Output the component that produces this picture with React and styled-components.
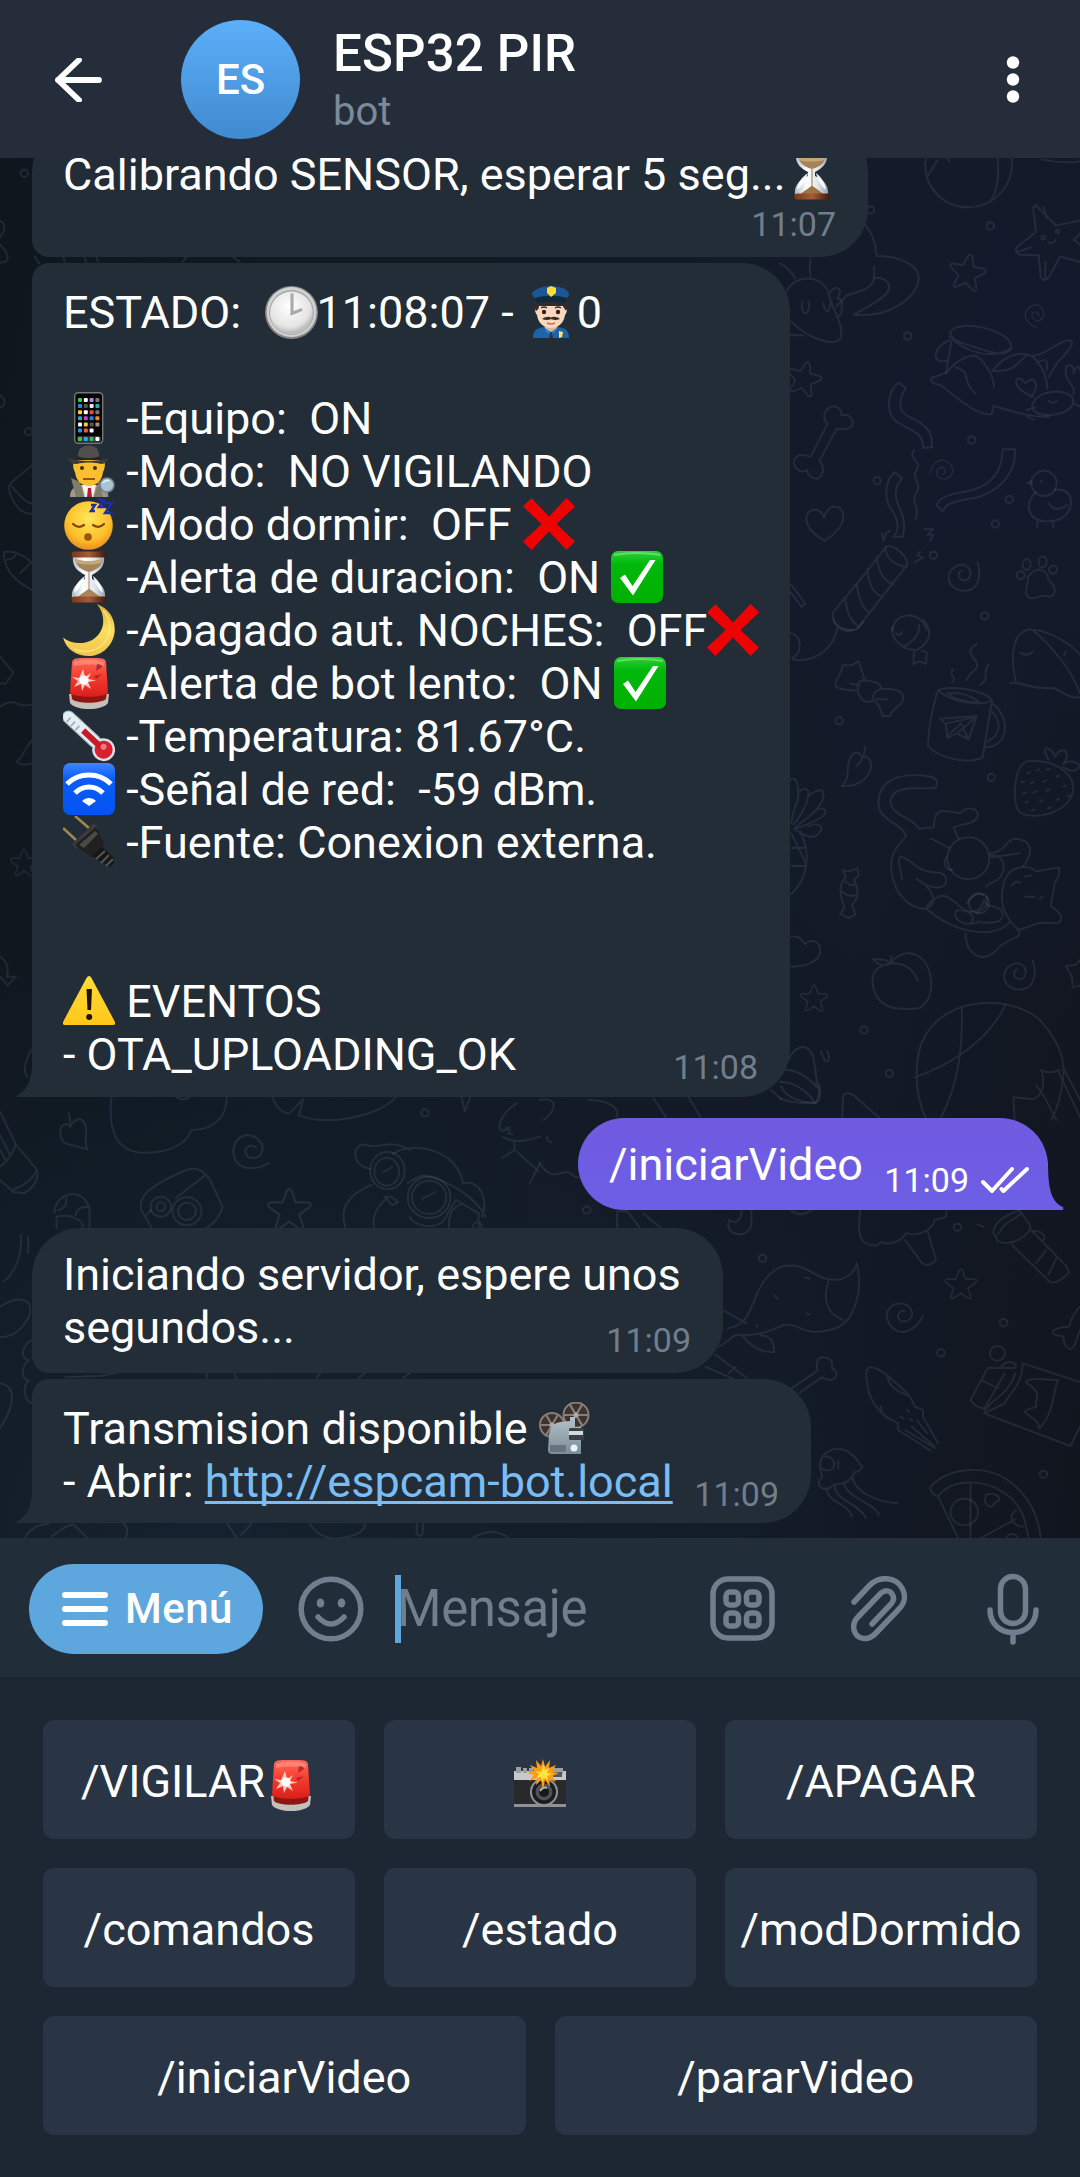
import React from "react";
import styled, { createGlobalStyle } from "styled-components";

const GlobalStyle = createGlobalStyle`
  * { box-sizing: border-box; }
  html, body { margin: 0; background: #1d2733; }
  body { font-family: Roboto, "Noto Sans", sans-serif; color: #fff; }
  svg { display: block; flex: none; }
`;

const Screen = styled.div`
  width: 1080px;
  height: 2177px;
  display: flex;
  flex-direction: column;
  overflow: hidden;
  background: #1d2733;
`;

/* ---------- header ---------- */
const Header = styled.header`
  height: 158px;
  flex: none;
  display: flex;
  align-items: center;
  padding: 1px 50px 0 54px;
  background: #252d3a;
`;
const Avatar = styled.div`
  width: 119px;
  height: 119px;
  margin-left: 79px;
  border-radius: 50%;
  display: flex;
  align-items: center;
  justify-content: center;
  background: linear-gradient(#5caffa, #408acf);
  font-size: 42px;
  font-weight: 500;
`;
const Titles = styled.div`
  flex: 1;
  margin-left: 33px;
  height: 158px;
  padding-top: 23px;
`;
const Title = styled.h1`
  margin: 0;
  font-size: 51px;
  font-weight: 500;
  line-height: 60px;
  letter-spacing: 0.15px;
`;
const Subtitle = styled.div`
  margin-top: 4px;
  font-size: 40px;
  line-height: 47px;
  color: #7c8a99;
`;

/* ---------- chat ---------- */
const Chat = styled.main`
  position: relative;
  height: 1380px;
  flex: none;
  overflow: hidden;
  display: flex;
  flex-direction: column;
  justify-content: flex-end;
  padding: 0 32px 15px;
  background:
    radial-gradient(ellipse 620px 620px at 100% 18%, #141a2c 0%, rgba(20, 26, 44, 0) 100%),
    radial-gradient(ellipse 700px 600px at 20% 100%, #15212e 0%, rgba(21, 33, 46, 0) 100%),
    linear-gradient(100deg, #0f171e 0%, #101922 35%, #131a27 75%, #11151e 100%);
`;
const Wallpaper = styled.svg`
  position: absolute;
  inset: 0;
  width: 1080px;
  height: 1380px;
  fill: none;
  stroke: rgba(165, 172, 205, 0.12);
  stroke-width: 5.8;
  stroke-linecap: round;
  stroke-linejoin: round;
`;
const Bubble = styled.section`
  position: relative;
  flex: none;
  align-self: ${(p) => (p.$out ? "flex-end" : "flex-start")};
  width: ${(p) => p.$w}px;
  margin-top: ${(p) => p.$gap || 0}px;
  padding: ${(p) => p.$pad};
  border-radius: ${(p) => p.$radius};
  display: flex;
  flex-direction: ${(p) => (p.$stack ? "column" : "row")};
  align-items: flex-end;
  justify-content: space-between;
  background: ${(p) => (p.$out ? "linear-gradient(#705ae0, #6c5fe5)" : "#222d38")};
`;
const Body = styled.div`
  align-self: flex-start;
  font-size: 45px;
`;
const Line = styled.div`
  height: 53px;
  line-height: 53px;
  display: flex;
  white-space: pre;
`;
const Link = styled.a`
  color: #7abdf5;
  text-decoration: underline;
  text-decoration-thickness: 3px;
  text-underline-offset: 4px;
  text-decoration-skip-ink: none;
`;
const Meta = styled.div`
  display: flex;
  align-items: center;
  gap: 12px;
  margin: ${(p) => p.$rise || 0}px 0 ${(p) => p.$drop || 0}px ${(p) => (p.$tuck ? "-90px" : "0")};
  font-size: 34px;
  line-height: 40px;
  color: ${(p) => (p.$out ? "#fff" : "#717e8c")};
`;
const Tail = styled.svg`
  position: absolute;
  bottom: 0;
  ${(p) => (p.$right ? "right: -16px;" : "left: -16px;")}
`;

/* ---------- composer ---------- */
const Composer = styled.div`
  height: 139px;
  flex: none;
  display: flex;
  align-items: center;
  padding: 2px 41px 0 29px;
  background: #222d3a;
`;
const MenuButton = styled.button`
  width: 234px;
  height: 90px;
  padding: 0 0 0 33px;
  border: 0;
  border-radius: 45px;
  display: flex;
  align-items: center;
  gap: 17px;
  background: #5da6de;
  color: #fff;
  font: 500 42px/50px Roboto, sans-serif;
  letter-spacing: 0.5px;
`;
const MessageField = styled.div`
  flex: 1;
  display: flex;
  align-items: center;
  margin-left: 31px;
  font-size: 51px;
  line-height: 60px;
  letter-spacing: -0.4px;
  color: #717e8e;
`;
const Caret = styled.span`
  width: 6px;
  height: 68px;
  background: #5da6de;
`;
const Placeholder = styled.span`
  margin-left: -4px;
`;
const Glyph = styled.svg`
  margin-left: ${(p) => p.$before || 0}px;
  fill: none;
  stroke: #717e8e;
  stroke-width: 5.5;
  stroke-linecap: round;
  stroke-linejoin: round;
`;
const Eye = styled.ellipse`
  fill: #717e8e;
  stroke: none;
`;
const Tools = styled.div`
  display: flex;
  align-items: center;
`;

/* ---------- keyboard ---------- */
const Keyboard = styled.div`
  flex: 1;
  display: flex;
  flex-direction: column;
  gap: 29px;
  padding: 43px 43px 42px;
  background: #1d2733;
`;
const KeyRow = styled.div`
  display: flex;
  gap: 29px;
`;
const Key = styled.button`
  flex: 1 1 0;
  min-width: 0;
  height: 119px;
  padding: 3px 0 0;
  border: 0;
  border-radius: 11px;
  display: flex;
  align-items: center;
  justify-content: center;
  white-space: nowrap;
  background: #293544;
  color: #fff;
  font: 400 45px/53px Roboto, sans-serif;

  svg {
    margin-top: 7px;
  }
`;

/* ---------- emoji ---------- */
const HiddenDefs = styled.svg`
  position: absolute;
  width: 0;
  height: 0;
`;
const Gradients = () => (
  <HiddenDefs aria-hidden="true">
    <defs>
      <radialGradient id="face" cx=".5" cy=".35" r=".65">
        <stop offset="0" stopColor="#ffe65c" /><stop offset=".7" stopColor="#fdbf2b" /><stop offset="1" stopColor="#f08c1e" />
      </radialGradient>
      <linearGradient id="red" x2="0" y2="1">
        <stop offset="0" stopColor="#ff6a5a" /><stop offset=".5" stopColor="#f53a2e" /><stop offset="1" stopColor="#d81f1a" />
      </linearGradient>
      <linearGradient id="green" x2="0" y2="1">
        <stop offset="0" stopColor="#2fd03a" /><stop offset=".25" stopColor="#00b80c" /><stop offset="1" stopColor="#00b000" />
      </linearGradient>
      <linearGradient id="blue" x2="0" y2="1">
        <stop offset="0" stopColor="#3f86ff" /><stop offset=".3" stopColor="#0a5cf8" /><stop offset="1" stopColor="#0454f2" />
      </linearGradient>
      <linearGradient id="wood" x2="1" y2="0">
        <stop offset="0" stopColor="#7a3718" /><stop offset=".5" stopColor="#a85b38" /><stop offset="1" stopColor="#3d1808" />
      </linearGradient>
      <linearGradient id="steel" x2="0" y2="1">
        <stop offset="0" stopColor="#b4c2c8" /><stop offset="1" stopColor="#7a8d96" />
      </linearGradient>
      <linearGradient id="glass" x2="1" y2="0">
        <stop offset="0" stopColor="#aeb8c4" /><stop offset=".35" stopColor="#ffffff" /><stop offset=".7" stopColor="#dfe5ea" /><stop offset="1" stopColor="#929faf" />
      </linearGradient>
      <radialGradient id="dial" cx=".45" cy=".35" r=".6">
        <stop offset="0" stopColor="#ffffff" /><stop offset=".8" stopColor="#e4e4e4" /><stop offset="1" stopColor="#bdbdbd" />
      </radialGradient>
      <linearGradient id="moon" x2="0" y2="1">
        <stop offset="0" stopColor="#e2ab31" /><stop offset=".5" stopColor="#fbdf60" /><stop offset="1" stopColor="#efc24a" />
      </linearGradient>
      <linearGradient id="warn" x2="0" y2="1">
        <stop offset="0" stopColor="#ffdc3c" /><stop offset="1" stopColor="#ffc818" />
      </linearGradient>
    </defs>
  </HiddenDefs>
);

const EmojiBox = styled.svg`
  margin: 0 ${(p) => -(p.$shift || 0)}px 0 ${(p) => p.$shift || 0}px;
`;
const Emoji = ({ size = 52, shift, label, children }) => (
  <EmojiBox $shift={shift} width={size} height={size} viewBox="0 0 52 52" role="img" aria-label={label}>{children}</EmojiBox>
);

const Hourglass = ({ filled }) => (
  <Emoji label="reloj de arena">
    <path d="M10 5h31c1 8-2 14-12 19v4c10 4 14 11 13 19H9c-1-8 3-15 13-19v-4C12 19 9 13 10 5z" fill="url(#glass)" />
    <path d="M12 8c9 3 19 3 27 0 0 7-5 11-13 13-8-2-13-6-14-13z" fill="#a58458" />
    <path d="M12 8c9 3 19 3 27 0l-1 4c-7 2-18 2-25 0z" fill="#c5a77c" />
    <path d="M25.500 21v17c-4 3-9 6-12 9h25c-3-3-8-6-12-9V21z" fill={filled ? "#9c7440" : "#a9845a"} />
    <path d="M22 25c-6 4-10 9-11 17 4-3 9-9 11-17zM30 25c5 4 9 9 10 17-4-3-8-9-10-17z" fill="#fff" opacity=".9" />
    <rect x="8.500" y="0.500" width="35" height="6" rx="2.500" fill="url(#wood)" />
    <rect x="8.500" y="45.500" width="35" height="6" rx="2.500" fill="url(#wood)" />
  </Emoji>
);
const Clock = () => (
  <Emoji size={53} shift={2} label="reloj">
    <circle cx="26" cy="26" r="26" fill="#858585" />
    <circle cx="26" cy="25.500" r="24.500" fill="#d2d2d2" />
    <circle cx="26" cy="26" r="22" fill="#a6a6a6" />
    <circle cx="26" cy="26.500" r="21" fill="url(#dial)" />
    <path d="M26.500 7v20l10-4" fill="none" stroke="#a9a9a9" strokeWidth="3" />
  </Emoji>
);
const Police = () => (
  <Emoji label="policia">
    <path d="M8 52c0-7 3-10 11-11h14c8 1 11 4 11 11z" fill="#1e62a8" />
    <path d="M19 40h14l-3 6-4 3-5-3z" fill="#2c80cf" />
    <path d="M20 34h12v8l-6 4-6-4z" fill="#e4b291" />
    <path d="M10 23c0-9 6-13 16-13s16 4 16 13c0 3-1 5-2 6-1 8-7 13-14 13s-13-5-14-13c-1-1-2-3-2-6z" fill="#f8d9bd" />
    <path d="M9 15h34v6c-1 3-2 3-2 4-2-3-3-4-3-5H14c0 2-1 4-3 5-1-2-2-4-2-6z" fill="#322b2a" />
    <path d="M7 7C12 2 18 0 26 0s14 2 18 7c0 4-2 5-6 7H14C9 12 7 10 7 7z" fill="#1c5694" />
    <path d="M10 12c10-3 22-3 32 0l-2 6c-9-3-19-3-28 0z" fill="#11283e" />
    <path d="M22 2l4-2 5 2v5l-5 4-4-4z" fill="#ffdc35" />
    <circle cx="19" cy="26" r="2.200" fill="#30221d" /><circle cx="33" cy="26" r="2.200" fill="#30221d" />
    <path d="M16 22q3-2 6 0M30 22q3-2 6 0" fill="none" stroke="#3d2a20" strokeWidth="1.500" />
    <path d="M17 33c3-2 7-3 9-1.500 3-1.500 6-.5 9 1.500-5 1.500-7 1-9 0-2 1-5 1.500-9 0z" fill="#3a2a23" />
    <path d="M22 37q4 2 8 0" fill="none" stroke="#c0705b" strokeWidth="1.500" />
    <path d="M25 46h2l1 6h-4z" fill="#173a63" /><path d="M34 45l4 1-1 5-3 1z" fill="#ffe262" />
  </Emoji>
);
const appColors = [
  "#35c759", "#fff", "#b48be8", "#777", "#1996d9", "#555", "#eee", "#22b0c0", "#ffcc33", "#fff", "#e84c4c", "#777",
  "#23a9c9", "#ce3bd0", "#1689ea", "#f28b1d", "#fff", "#f5c645", "#555", "#a98d70", "#2396d8", "#ee574b", "#fff",
];
const Phone = () => (
  <Emoji label="movil">
    <rect x="11.700" y=".7" width="28" height="50.600" rx="3.500" fill="#050505" stroke="#777" strokeWidth="1.400" />
    {appColors.map((c, i) => (
      <rect key={i} x={15 + (i % 4) * 5.800} y={6 + Math.floor(i / 4) * 6.100} width="4" height="4" rx="1" fill={c} />
    ))}
    <rect x="14" y="44" width="24" height="6" rx="1.500" fill="#313335" />
    {["#34c35b", "#27aee4", "#31bd67", "#fff"].map((c, i) => (
      <rect key={c} x={15 + i * 5.800} y="45" width="4" height="4" rx="1" fill={c} />
    ))}
  </Emoji>
);
const Detective = () => (
  <Emoji label="detective">
    <path d="M7 52c0-7 3-9 9-12h19c6 2 9 6 9 12z" fill="#a09b88" />
    <path d="M8 33l9 4 4 15h-8zM36 35l-5 17h9z" fill="#807c6c" />
    <path d="M19 40h14l-3 12h-8z" fill="#f4f4f4" /><path d="M25 43h3l1 9h-5z" fill="#b51f2c" />
    <path d="M11 15h30c2 6 0 10-1 12-1 9-7 14-14 14s-13-5-14-14c-1-2-3-6-1-12z" fill="#fbbf2b" />
    <path d="M16 5C20-1 32-1 35 5l2 9H14z" fill="#514f4e" />
    <path d="M14 11c8 3 16 3 23 0l1 4H13z" fill="#272524" />
    <path d="M5 13c12 4 29 4 41 0-2 4-5 6-8 6-7-2-17-2-24 0-5 0-7-2-9-6z" fill="#3d3a39" />
    <circle cx="19" cy="23" r="2" fill="#44301a" /><circle cx="32" cy="23" r="2" fill="#44301a" />
    <path d="M20 34h12" stroke="#8a4b12" strokeWidth="1.800" />
    <path d="M43 45l1 7" stroke="#8d9294" strokeWidth="3" />
    <circle cx="44" cy="40" r="7" fill="#a8c3d4" stroke="#768089" strokeWidth="1.600" />
    <path d="M40 38q3-4 6-2" stroke="#e6f1f8" strokeWidth="1.600" fill="none" />
  </Emoji>
);
const Sleepy = () => (
  <Emoji label="durmiendo">
    <circle cx="25.500" cy="27.500" r="24.300" fill="url(#face)" />
    <path d="M10 26q5 5 11 1M30 27q6 4 11-1" fill="none" stroke="#80460e" strokeWidth="2.200" strokeLinecap="round" />
    <circle cx="25" cy="39" r="3.800" fill="#9a5215" />
    <path d="M28 7h4l-4 6h4M35 2h6l-5 7h6M41 5h8l-7 10h8" fill="none" stroke="#1c2fa3" strokeWidth="2.400" />
  </Emoji>
);
const Moon = () => (
  <Emoji label="luna">
    <path d="M34 0C47 5 53 16 51.500 29 49 44 37 52 26 52 13 52 3 45 0 33.500 9 41 25 41 33 33c10-9 9-23 1-33z" fill="url(#moon)" />
    <path d="M40 6c8 9 9 22 2 32-7 9-20 12-31 7" fill="none" stroke="#ffec8c" strokeWidth="2" opacity=".6" />
  </Emoji>
);
const Siren = () => (
  <Emoji label="sirena">
    <path d="M6 37h40l-1 9c-6 8-32 8-38 0z" fill="#c3bfba" />
    <path d="M8 34h36l-1 8c-6 5-29 5-34 0z" fill="#8f1513" />
    <path d="M9 5c1-4 4-4 17-4s16 0 17 4l2 31c-5 5-33 5-38 0z" fill="url(#red)" />
    <path d="M11 5c5-3 25-3 30 0v4c-9-2-21-2-30 0z" fill="#ff9184" opacity=".7" />
    <path d="M34 7c3 0 5 1 5 3l-6 4M31 19l8-2-6 5z" fill="#8d1917" opacity=".65" />
    <path d="M20 12l2 8 6-4-3 6 8 1.500-8 1.500 3 7-6-4-3 6-1-7-7 3 4-6-6-4 7 1z" fill="#ffc9c0" />
    <circle cx="21" cy="23" r="4.500" fill="#fff" />
  </Emoji>
);
const Thermometer = () => (
  <Emoji label="termometro">
    <g transform="rotate(-47 26 26)">
      <rect x="20" y="-8" width="12" height="48" rx="6" fill="#e5eef3" stroke="#a9b7c1" strokeWidth="1" />
      <circle cx="26" cy="46" r="11.500" fill="#d9dfe8" />
      <circle cx="26" cy="46" r="9" fill="#d9202c" />
      <rect x="23" y="18" width="6" height="26" fill="#c91a27" />
      <path d="M21 0h6M21 6h6M21 12h6" stroke="#9babb5" strokeWidth="1.600" />
      <circle cx="28" cy="44" r="3" fill="#f87a80" />
    </g>
  </Emoji>
);
const Wifi = () => (
  <Emoji label="wifi">
    <rect width="52" height="52" rx="7" fill="url(#blue)" />
    <path d="M4 21C16 9 36 9 48 21" fill="none" stroke="#fff" strokeWidth="5" />
    <path d="M12 30c8-8 20-8 28 0" fill="none" stroke="#fff" strokeWidth="5" />
    <path d="M26 43l-7-5c4-4 10-4 14 0z" fill="#fff" />
  </Emoji>
);
const Plug = () => (
  <Emoji label="enchufe">
    <path d="M0 12l13 12M12 0l14 12" stroke="#9c8a4a" strokeWidth="2.600" />
    <path d="M9 28L31 7l4 5-22 21z" fill="#3a3b38" />
    <path d="M12 29L33 11l8 16-4 12-9 2z" fill="#1f201f" />
    <path d="M16 29l16-14 3 3-14 14z" fill="#494a47" />
    <path d="M29 40l10-9 12 11v5l-4 4z" fill="#171717" />
    <path d="M33 43l9-8M38 47l8-8M43 50l7-7" stroke="#555652" strokeWidth="2" />
  </Emoji>
);
const Cross = () => (
  <Emoji label="no">
    <path d="M8.500 0L26 18.500 43.500 0 52 8.500 33.500 26 52 43.500 43.500 52 26 33.500 8.500 52 0 43.500 18.500 26 0 8.500z" fill="#ee0202" />
  </Emoji>
);
const Check = () => (
  <Emoji label="si">
    <rect width="52" height="52" rx="7" fill="url(#green)" />
    <path d="M3 4q23-4 46 0" stroke="#7be77d" strokeWidth="2" fill="none" opacity=".7" />
    <path d="M9 27l5-3.500L21.500 35 39 9h5.500L22 44.500z" fill="#fff" />
  </Emoji>
);
const Warning = () => (
  <Emoji label="aviso">
    <path d="M23.500 3q2.500-4 5 0L52 47q1 3-2 3H2q-3 0-2-3z" fill="url(#warn)" />
    <path d="M23.500 14h5.500l-1 21h-3.500z" fill="#1d1404" />
    <circle cx="26.200" cy="42" r="3" fill="#1d1404" />
  </Emoji>
);
const Projector = () => (
  <Emoji label="proyector">
    {[[13, 23, 12], [37, 13, 12.500]].map(([x, y, r]) => (
      <g key={x} fill="none" stroke="#8a7d77">
        <circle cx={x} cy={y} r={r} fill="#3a3330" strokeWidth="2" />
        <path d={`M${x - r} ${y}h${r * 2}M${x - r / 2} ${y - r * .85}l${r} ${r * 1.7}M${x + r / 2} ${y - r * .85}l${-r} ${r * 1.7}`} strokeWidth="2.200" />
        <circle cx={x} cy={y} r="2.500" fill="#b1aaa6" stroke="none" />
      </g>
    ))}
    <path d="M10 32q2-11 11-12l10-1v-4h5v10h6v27H13q-4 0-4-4z" fill="url(#steel)" />
    <rect x="11" y="43" width="16" height="7" fill="#66757d" />
    <rect x="30" y="26" width="15" height="12" rx="1.500" fill="#394147" />
    <rect x="30" y="29" width="14" height="4" fill="#d3dadd" />
    <circle cx="35" cy="46" r="3.500" fill="#eef2f3" />
  </Emoji>
);
const Camera = () => (
  <Emoji label="camara">
    <rect y="14" width="52" height="34" rx="2" fill="#28292b" />
    <path d="M0 12h52v9H0z" fill="#c7c9ca" />
    <path d="M2 8h5v6H2zM9 9h4v5H9zM15 9h4v5h-4zM38 9h11v6H38z" fill="#9da0a2" />
    <rect x="39" y="13" width="9" height="5" fill="#56595b" />
    <path d="M0 45h52v3H0z" fill="#909395" />
    <circle cx="30" cy="33" r="14" fill="#909294" /><circle cx="30" cy="33" r="12" fill="#1a1b1d" />
    <circle cx="30" cy="33" r="8.500" fill="#4e5156" /><circle cx="30" cy="33" r="5" fill="#17181a" />
    <path d="M26 32q3-5 7-3" stroke="#b0b4b8" strokeWidth="2" fill="none" />
    <path d="M29 0l2 8 5-7-1 8 7-3-4 7 7 1-7 3 4 6-7-3 1 8-5-7-2 10-2-10-5 5 1-7-8 3 5-6-7-2 7-2-4-6 7 3-1-8 5 6z" fill="#ff9d13" />
    <path d="M30 5l1 6 4-2-2 5 5 1-5 2 1 4-4-2-2 4-1-5-5 1 3-4-3-3 5 1z" fill="#ffe347" />
  </Emoji>
);

/* ---------- wallpaper doodles ---------- */
const Dot = ({ x, y }) => <circle cx={x} cy={y} r="11" />;
const Star = ({ x, y, s = 1, r = 0 }) => (
  <path transform={`translate(${x} ${y}) rotate(${r}) scale(${s})`}
    d="M-7-48Q0-62 7-48L16-20 46-20Q62-16 48-5L25 12 35 42Q36 55 22 47L0 30-24 47Q-37 53-33 39L-25 12-49-6Q-60-17-46-20L-17-20Z" />
);
const Spiral = ({ x, y, s = 1, r = 0 }) => (
  <path transform={`translate(${x} ${y}) rotate(${r}) scale(${s})`}
    d="M-4-14C-16-8-14 14 4 15 24 15 30-14 14-26-8-42-42-22-42 8-40 40-2 54 26 42 50 30 56-8 44-40" />
);
const Heart = ({ x, y, s = 1, r = 0 }) => (
  <path transform={`translate(${x} ${y}) rotate(${r}) scale(${s})`}
    d="M0 52C-30 36-58 10-55-18-50-48-12-50-2-16 6-58 52-62 56-24 58 6 28 36 0 52Z" />
);
const Leaf = ({ x, y, s = 1 }) => (
  <path transform={`translate(${x} ${y}) scale(${s})`}
    d="M-48 58C-18 30-42 0-20-32-8-48 4-44 10-30 30-36 44-16 38 6 30 44-12 60-48 58ZM-4-2C12-18 22-36 20-60" />
);

const Doodles = () => (
  <Wallpaper viewBox="0 158 1080 1380" aria-hidden="true">
    {/* upper right */}
    <g transform="translate(780 150) scale(.33333)">
      <path d="M438 20C424 110 490 172 566 172 648 170 706 100 694 20M652 20C660 80 650 130 630 155M445 75L472 30M495 20l14 14M785 28q60 14 115 6" />
      <path d="M768 166Q756 166 762 196L768 246 712 290Q700 308 720 314L776 316 782 380Q792 400 808 380L840 320 900 336M768 166L828 226 900 212M790 170l10 34M712 306l40-14M796 385v-50M882 270l18-20M882 270l18 14" />
      <circle cx="790" cy="263" r="6" /><circle cx="832" cy="244" r="5" /><path d="M806 276q12 10 20-6" />
      <Star x="562" y="368" r="10" s="1" /><Star x="72" y="686" r="14" s=".95" />
      <path d="M255 225C280 250 288 290 290 318 350 318 416 340 416 386 410 450 320 504 222 494 260 470 330 440 328 410 324 384 290 380 282 386 276 420 230 425 200 436L170 468M282 386v-36M92 324q-6 26 0 58M0 340q30 16 46 46" />
      <path d="M20 424C40 376 120 370 144 424 156 480 190 520 184 560 170 594 90 570 32 514M30 556h40M68 455q-8 26 8 36 14-6 10-36M130 460q4 24 14 24 6-8 6-24M148 430q20-30 32-6-4 18-8 20 20 6 12 26 6 20-10 30" />
      <Spiral x="768" y="494" s=".65" r="130" />
      <path d="M512 545C540 505 690 540 694 588 690 618 650 614 606 598 560 584 500 570 512 545ZM508 570C460 590 450 644 500 632M514 574L498 668M694 594C640 630 560 610 508 560" />
      <path d="M500 668L454 684Q450 702 480 704C530 740 590 800 636 792L640 768C700 784 760 804 806 800M500 668C520 640 560 612 590 618 620 640 640 680 642 710M528 652C580 670 540 690 586 730M636 664C670 620 710 600 756 618 790 650 800 680 802 716M640 662q40 4 60-10l40-36M756 618C800 616 830 572 870 570 890 580 850 620 830 640L806 680M770 640q40-28 30 20" />
      <path d="M758 760C780 716 860 716 878 744 890 780 830 804 780 792 760 786 754 774 758 760ZM760 740C680 710 710 660 736 700 770 666 780 720 750 742M880 734C890 700 850 700 858 650 870 640 886 650 880 670 890 640 900 650 900 660M740 780l26-8M742 800l20 10M880 760l20 10M806 752q14 14 24 0" />
      <path d="M355 698C326 720 314 780 346 812 380 840 430 840 430 894L456 892C460 840 430 820 386 800 348 780 360 740 378 714ZM345 966C314 990 310 1050 336 1080 354 1110 360 1140 340 1160L368 1160C384 1100 350 1070 348 1040 344 1010 356 1000 366 986ZM668 898C668 960 640 1000 580 1020 530 1030 480 1034 470 1066L488 1084C500 1050 560 1050 600 1040 680 1010 710 950 704 898ZM402 900C380 930 430 930 410 960 390 980 430 1000 408 1030 390 1060 424 1070 406 1108" />
      <path d="M150 772C170 762 186 780 184 796 210 788 228 816 212 832 200 842 184 838 170 836L118 934C136 950 130 980 112 986 92 988 82 972 82 960 60 974 38 950 42 930 52 910 76 914 92 920L142 822C126 804 132 780 150 772Z" />
      <Heart x="134" y="1120" /><Spiral x="488" y="964" s=".68" r="210" /><Spiral x="548" y="1276" s="1" />
      <path d="M318 1190C290 1230 190 1350 160 1386 154 1410 170 1440 220 1440M380 1246L232 1436M318 1190C340 1180 390 1220 380 1250 350 1250 310 1220 318 1190ZM290 1222q10 70 50 80M262 1256q6 70 44 84M230 1300q6 60 34 86M196 1346q6 60 36 80M305 1150l6 24 6-24 14-8M434 1138h26l-18 16h18l-10 18M420 1206l-10 10 20 6-26 14M336 1440q10-44 54-44 40 6 50 44" />
      <circle cx="792" cy="1000" r="38" /><path d="M768 1026C730 1060 740 1116 806 1114 880 1110 886 1040 856 1024 840 1016 830 1018 824 1020M806 1060q20 30 56 4M756 1000h-14l10-8M772 1114v20M820 1114v20M784 992v4" />
      <path d="M744 1280C770 1246 800 1256 806 1290 830 1310 830 1340 806 1340 780 1330 770 1350 748 1344 728 1330 744 1310 744 1280Z" /><ellipse cx="740" cy="1244" rx="12" ry="16" /><ellipse cx="788" cy="1236" rx="12" ry="17" /><circle cx="819" cy="1259" r="12" /><circle cx="722" cy="1276" r="12" />
      <path d="M34 1304l42 58-12 8-34-46" />
      <Dot x="631" y="228" /><Dot x="383" y="558" /><Dot x="575" y="870" /><Dot x="291" y="992" /><Dot x="688" y="1048" /><Dot x="646" y="1122" /><Dot x="460" y="1216" /><Dot x="614" y="1398" /><Dot x="272" y="180" />
    </g>
    {/* middle right */}
    <g transform="translate(780 620) scale(.33333)">
      <path d="M30 38c40 10 36 60 6 78M36 118C110 130 166 80 172 20M160 0c10 34 60 50 90 6M338 20C330 60 370 92 410 90 450 70 460 30 430 0M348 40q10 10 18-4M418 14q0 40-44 64M402 96l-2 36 18-8 20 8 2-34-14-6" />
      <path d="M168 200C160 180 184 170 188 136L214 136 236 124 254 180C280 186 300 186 304 206 330 206 370 206 370 236 370 256 340 260 330 288L308 288C300 270 300 250 280 240 260 256 236 236 234 212 210 210 190 214 168 200ZM234 212q-6-30 20-32M280 240q-6-24 24-34M210 190l30 6M290 238h30" />
      <path d="M474 210C440 320 446 370 444 378 470 410 560 436 608 412L636 240M474 210C520 196 610 210 636 240 600 264 500 240 474 210ZM500 220q60-6 100 28-60 0-100-28M636 250C700 300 680 380 618 382M636 276C670 310 656 350 622 364M480 296l110-8-24 70-36-18-28 14-4-40ZM500 310l90-20-54 46M500 350l44-40 20 46" />
      <path d="M516 188c20-20-16-20 4-40M560 180C570 150 604 150 588 124 570 100 560 90 590 72M602 194C630 176 606 160 626 134" />
      <path d="M708 186C690 110 696 40 746 28 800 30 860 60 900 104M690 190C720 180 740 210 820 204 850 216 870 238 900 232M760 32C820 80 880 160 900 220M722 98q20 14 36-4M852 106l6-12" />
      <Leaf x="234" y="440" /><Dot x="178" y="302" /><Dot x="634" y="472" />
      <path d="M740 424C700 440 696 550 718 576 760 604 870 580 880 510 880 450 810 416 740 424ZM806 420C780 380 806 370 826 410 840 376 880 390 850 432M850 430q30-14 50 6-16 30-50 4" />
      {[[742, 460], [770, 452], [800, 450], [724, 488], [752, 490], [790, 486], [830, 470], [730, 520], [760, 518], [800, 512], [850, 500], [736, 548], [780, 545], [830, 540], [756, 572], [804, 566], [862, 530]].map(([x, y]) => <path key={`${x}-${y}`} d={`M${x} ${y}l8-4`} />)}
      <path d="M30 480C56 460 56 520 54 540 40 570 36 590 34 610M54 520C70 500 90 500 84 530 80 560 60 590 40 614M84 530C110 506 140 500 128 540 110 580 70 600 44 624M110 570C140 556 150 580 110 600 80 616 60 620 44 628M84 620C110 606 140 616 116 640 100 660 80 650 44 628M60 634C90 690 90 770 34 822M34 684h44M34 738h44M34 640l44 90" />
      <path d="M188 750q20 10 44-6l4 22-14 14c20 40 10 60-6 74l10 30-20 10-26-12 14-20c-14-30-20-70 4-90zM196 784q16 16 30 10M186 814q20 20 46 10" />
      <path d="M416 626C400 590 330 590 332 540 340 490 430 510 466 504 480 480 470 470 420 466 330 460 290 500 296 560 310 610 370 610 378 650 350 680 330 700 334 750 340 820 390 870 440 866M416 626L462 622C460 560 490 570 540 580 560 560 590 560 594 584 590 616 540 610 520 624 530 640 534 650 536 656M454 656l54 28M366 776C360 740 350 720 362 710 400 720 410 760 480 758 510 770 500 800 480 802 450 806 430 790 410 776M440 866C480 846 450 810 440 800M440 860C480 810 500 826 530 850 560 880 600 890 612 840M440 866C500 920 570 940 630 936 660 930 680 918 690 906M530 870C510 900 560 924 600 904M528 872C590 864 590 920 556 910M612 840C620 870 660 850 668 880 670 910 640 908 606 908" />
      <circle cx="565" cy="715" r="63" /><circle cx="597" cy="850" r="30" /><path d="M560 850q30-40 50-24M590 880q40-20 30-50M630 700C690 690 670 660 706 656 760 660 760 700 730 738M634 712L718 700M630 706c40 0 50 30 34 60-10 20-36 20-46 34M500 712c-14 20 0 40 16 38" />
      <path d="M674 780C690 740 740 730 768 754L836 742Q844 760 824 790L812 858 840 880Q850 906 830 910L780 908 716 930C680 900 650 850 674 780ZM696 796q14-20 24-6M734 770l20-4M736 830h28M780 836l8-6M716 930C730 960 680 950 650 990 610 1030 560 1010 556 940" />
      <path d="M34 950C60 946 66 960 74 972 100 950 130 970 118 1006 100 1036 60 1040 34 1040" /><Star x="102" y="1136" s=".75" />
      <path d="M334 1030C290 1036 270 1060 280 1104 294 1160 340 1174 420 1164 470 1130 460 1040 420 1012 390 990 350 1000 334 1030ZM334 1030C380 1030 400 1050 414 1082M334 1030C310 1040 296 1036 280 1018 310 1016 320 1020 334 1030V1008" />
      <Spiral x="714" y="1062" /><path d="M900 1020l-12 14-30 4 18 32 2 32 22-6" /><Dot x="252" y="1230" /><Dot x="328" y="1360" />
      <path d="M440 1500C400 1420 400 1300 440 1240 520 1120 700 1130 780 1200 860 1290 850 1340 850 1372M545 1160C550 1300 530 1400 480 1500M676 1156C620 1270 500 1340 404 1372M850 1344L900 1440M834 1352L900 1492M784 1350q20 14 56 0M784 1350C800 1400 780 1430 760 1438L700 1432 704 1500M768 1396C800 1430 810 1470 830 1500M850 1372q-10 80-36 128" />
      <path d="M20 1330C40 1280 80 1260 100 1310L110 1380C130 1420 120 1450 100 1450M0 1350q60-6 108 50M0 1386q60 0 106 62M0 1436c40 14 70 16 100 10M122 1294l14 30M142 1294q10 20 0 30M186 1500l4-76q16-10 34 4l74 66" />
    </g>
    {/* below the status message, left */}
    <g transform="translate(0 950) scale(.34439 .33333)">
      <path d="M324 440C310 560 350 612 430 608 500 606 540 580 556 540 620 540 660 500 658 440M512 440q20 16 40 0M790 440C800 470 820 490 840 490L880 448 868 496C950 530 1100 500 1150 440" />
      <path d="M0 484L46 584 108 660Q116 700 70 730L40 726 0 690M46 584Q30 630 0 650M0 556l30 60M0 600l16 30M108 660q-20 40-70 60" />
      <path d="M200 490l6 36M204 530C180 500 160 560 190 580L254 598C240 570 260 550 244 516 230 500 214 510 204 530Z" />
      <Spiral x="728" y="600" s="1.1" r="80" />
      <path d="M440 834L410 780C400 740 430 710 540 660 570 650 590 660 610 690L646 770C640 800 620 820 600 834M424 796L440 780M510 744L596 676" /><circle cx="467" cy="770" r="30" /><circle cx="467" cy="770" r="13" /><circle cx="543" cy="784" r="42" /><circle cx="543" cy="784" r="26" />
      <path d="M164 834V800Q210 790 240 820V834M158 790C160 720 250 710 260 780V834M168 780q30-6 24-44M260 770q-40 0-40 26" />
      <Star x="840" y="780" s="1.15" />
      <path d="M1075 656C1020 650 1020 580 1060 584 1090 600 1130 570 1170 590L1190 600M1140 612C1200 570 1330 600 1344 700 1390 690 1420 740 1400 800M1080 704C1020 730 980 770 1004 834M1130 740C1090 770 1080 800 1086 834M1116 740l24 26 16-10-20-16ZM1184 700C1200 690 1220 670 1250 680 1310 700 1380 740 1410 800M1190 800C1200 830 1280 850 1300 790L1324 750 1390 790V834M1370 834q20-40 30 0M1304 834q-4-60 36-70" />
      <ellipse cx="1125" cy="662" rx="50" ry="56" /><ellipse cx="1123" cy="665" rx="36" ry="42" /><circle cx="1246" cy="742" r="62" /><circle cx="1246" cy="742" r="50" /><path d="M1112 666l26-14M1226 746l38-20M1480 530C1440 570 1436 500 1500 460M1468 534l14 6-8 10 14 2M1460 560C1500 590 1560 560 1568 560M1494 570v30l-36 24M1500 604l64 60M1568 640l-30 60M1340 440l10 44 14-40" />
      <Dot x="1234" y="488" /><path d="M0 20q30 20 20 60h26l-24 26L0 80M90 300q-30 60-10 80" />
    </g>
    {/* lower left */}
    <g transform="translate(0 1200) scale(.34439 .33333)">
      <path d="M60 104C66 170 40 220 12 244M82 110v50M0 320C60 280 100 300 84 350 60 400 30 410 0 412M92 420C60 440 60 480 84 480 60 500 60 540 84 540 64 560 70 600 92 610M0 550C60 560 30 640 0 684" />
      <path d="M70 1020C80 990 110 972 140 972M150 1010q60-50 70-30l40 40M360 972q20 20 0 48M660 972l30 44M700 1004l30-32M900 972q30 50 90 42 70-10 70-42M1210 972v30q20 20 18-30M1370 1016q60-40 110 0M190 532l100-4 50-10M600 518v18M680 518l6 18M920 534l10-14M1040 534l20-14M1170 534l20-14" />
    </g>
    {/* around the outgoing message */}
    <g transform="translate(540 1080) scale(.34439 .33333)">
      <path d="M330 56l36 56M430 50l36 60M0 60c40-10 60 20 10 60M140 60C210 60 230 90 222 110M20 170q0 14 14 18M0 250C40 320 70 250 100 290 130 300 150 280 150 270M670 30L700 56M700 20q20 44 100 50 20-40 0-60" /><Dot x="136" y="390" />
    </g>
    {/* lower right */}
    <g transform="translate(540 1200) scale(.34439 .33333)">
      <path d="M224 84V34h30l36 50M300 40l50 44M550 60C530 110 610 120 614 70V30M550 60q30 20 36-30M730 34q30 18 60-4" /><Dot x="646" y="175" /><Dot x="1212" y="82" /><path d="M1270 74l18 6" />
      <path d="M545 385C640 370 600 250 700 200 780 180 800 250 870 238 900 230 916 210 920 190 940 280 910 380 840 390 760 410 760 370 710 374 670 390 640 410 570 404 545 420 530 436 520 440M838 240C820 300 830 340 880 360M530 330l70 40M640 406q40 0 40 50-50 4-90-46M480 500L560 536M510 464l90 70M548 520l20-20M680 286l10 10M774 340l10 4M770 232l12 4M630 376v4" />
      <path d="M930 30C920 110 930 140 980 136L990 126C1020 140 1050 120 1064 100 1100 110 1140 90 1146 60L1180 50V34M1060 120l50 70Q1130 202 1150 180L1126 96" />
      <path d="M1316 96C1320 60 1370 36 1394 32L1424 78C1420 110 1370 140 1330 124ZM1330 104C1350 60 1380 60 1396 40M1370 134L1480 246Q1500 256 1536 218L1530 200 1426 90M1440 190l30-40M1476 224l24-50M1430 92c40 0 40 30 26 30" />
      <Star x="1222" y="254" s=".84" /><Spiral x="1052" y="346" r="45" /><Dot x="1346" y="368" /><Dot x="1164" y="458" /><Dot x="1462" y="823" />
      <path d="M732 564L806 512C800 480 810 470 826 472 850 476 850 490 848 504 870 520 860 540 840 540L818 532 754 578M1568 320C1540 350 1540 370 1536 380 1510 380 1480 390 1492 404L1520 410C1520 440 1540 460 1552 436L1568 390" />
      <path d="M948 530C944 500 960 490 1000 520 1060 570 1080 590 1088 620L1112 630V650L1156 730M948 530C950 600 980 640 1040 670V690L1134 752M1010 530C1010 560 1050 580 1066 586M990 620q0 30 30 40M1060 690l86 54M1080 680l66 60M1094 660l30 40M1066 630l6 6M1046 650l10 6M1074 658l8 2" />
      <path d="M820 830C790 750 870 730 900 760 930 780 920 790 936 800 930 820 910 810 910 824 900 850 870 850 850 856 830 880 800 860 812 840ZM824 770c30-4 40 30 20 40-14 4-24-2-30-8M866 784v20M830 864c10 50 60 40 76 86M856 860c0 40 70 50 90 94M884 850c0 40 90 60 100 94M908 836c10 40 70 70 130 74" />
      <path d="M1250 600L1300 504H1380C1390 480 1340 480 1340 504M1250 600Q1260 620 1290 626L1350 520M1280 540l50 24M1402 490L1568 546M1402 490C1400 560 1360 580 1350 610L1290 640 1540 738 1568 680M1380 520C1360 590 1300 600 1290 640M1506 540C1490 550 1500 630 1450 686 1450 660 1420 650 1408 636 1410 620 1450 630 1440 610 1440 590 1460 580 1410 546 1430 530 1470 540 1506 540Z" /><circle cx="1328" cy="460" r="22" />
      <path d="M1134 860C1190 800 1300 790 1370 850 1430 900 1450 960 1454 1020M1134 860C1130 880 1150 886 1156 890 1190 840 1280 830 1350 880 1410 920 1410 980 1420 1020M1156 890L1214 1014M1250 850v164M1280 1014l100-56M1296 884c20-6 40 0 36 20-20 0-10 20-26 16-14-6-16-20-10-36M1384 930c-30 20-10 50 20 50M1356 1010q14-18 30 0" /><circle cx="1232" cy="936" r="40" />
    </g>
    {/* narrow strip along the left edge */}
    <g transform="translate(0 150) scale(.33333)">
      <Dot x="73" y="70" /><Dot x="86" y="845" />
      <path d="M0 212c20 10 14 30 0 50M0 284c20 20 40 54 0 54M0 736c20 10 16 34 0 36M96 946L36 996Q20 1010 34 1040 54 1090 96 1092M36 1010q40 50 60 50M12 1206C40 1200 80 1220 96 1240M12 1206C10 1270 60 1300 96 1320M20 1230q30-6 28-24M60 1270l30-30M0 1520l40 48-24 34L0 1600M0 1670q30-20 50-10 20 10 46 4M96 1770C70 1800 70 1820 50 1836q20 14 46 4" />
      <path d="M104 320l14 20M190 322l4 14M254 322l4 14M290 322l4 14M548 336l10-14M700 322l20 14" />
      <Star x="72" y="2140" s=".75" />
    </g>
  </Wallpaper>
);

/* ---------- message parts ---------- */
const InTail = () => (
  <Tail width="17" height="30" viewBox="0 0 17 30"><path d="M16 0H17V30H1q-2-1 1-2Q15 20 16 0z" fill="#222d38" /></Tail>
);
const OutTail = () => (
  <Tail $right width="18" height="48" viewBox="0 0 18 48"><path d="M0 0H2C2 26 5 40 17 45q1 3-1 3H0z" fill="#6c5fe5" /></Tail>
);
const DoubleCheck = () => (
  <svg width="48" height="26" viewBox="0 0 48 26" fill="none" stroke="#fff" strokeWidth="3.900" strokeLinecap="round" strokeLinejoin="round">
    <path d="M2 15l9 9L31 2M20.500 22l2 2L46 2" />
  </svg>
);

const Status = () => (
  <Body>
    <Line>{"ESTADO:  "}<Clock />{"11:08:07 - "}<Police />0</Line>
    <Line />
    <Line><Phone />{" -Equipo:  ON"}</Line>
    <Line><Detective />{" -Modo:  NO VIGILANDO"}</Line>
    <Line><Sleepy />{" -Modo dormir:  OFF "}<Cross /></Line>
    <Line><Hourglass />{" -Alerta de duracion:  ON "}<Check /></Line>
    <Line><Moon />{" -Apagado aut. NOCHES:  OFF"}<Cross /></Line>
    <Line><Siren />{" -Alerta de bot lento:  ON "}<Check /></Line>
    <Line><Thermometer />{" -Temperatura: 81.67°C."}</Line>
    <Line><Wifi />{" -Señal de red:  -59 dBm."}</Line>
    <Line><Plug />{" -Fuente: Conexion externa."}</Line>
    <Line />
    <Line />
    <Line><Warning />{" EVENTOS"}</Line>
    <Line>- OTA_UPLOADING_OK</Line>
  </Body>
);

export default function App() {
  return (
    <Screen>
      <GlobalStyle />
      <Gradients />
      <Header>
        <svg width="48" height="44" viewBox="0 0 48 44" fill="none" stroke="#fff" strokeWidth="5.800" strokeLinecap="round" strokeLinejoin="round">
          <path d="M45 22H4M25 2L4 22l21 20" />
        </svg>
        <Avatar>ES</Avatar>
        <Titles>
          <Title>ESP32 PIR</Title>
          <Subtitle>bot</Subtitle>
        </Titles>
        <svg width="34" height="48" viewBox="0 0 34 48" fill="#fff">
          <circle cx="17" cy="6.500" r="6.200" /><circle cx="17" cy="23.500" r="6.200" /><circle cx="17" cy="40.500" r="6.200" />
        </svg>
      </Header>

      <Chat>
        <Doodles />
        <Bubble $w={836} $pad="24px 32px 13px 31px" $radius="48px 48px 48px 17px" $stack>
          <Body><Line>Calibrando SENSOR, esperar 5 seg...<Hourglass filled /></Line></Body>
          <Meta $rise={3}>11:07</Meta>
        </Bubble>
        <Bubble $w={758} $gap={6} $pad="23px 32px 16px 31px" $radius="17px 48px 48px 0">
          <Status />
          <Meta $tuck $drop={-6}>11:08</Meta>
          <InTail />
        </Bubble>
        <Bubble $out $w={470} $gap={21} $pad="20px 19px 19px 31px" $radius="46px 48px 0 46px">
          <Body><Line>/iniciarVideo</Line></Body>
          <Meta $out $drop={-9}>11:09<DoubleCheck /></Meta>
          <OutTail />
        </Bubble>
        <Bubble $w={691} $gap={18} $pad="20px 32px 19px 31px" $radius="48px 48px 48px 17px">
          <Body>
            <Line>Iniciando servidor, espere unos</Line>
            <Line>segundos...</Line>
          </Body>
          <Meta $tuck $drop={-6}>11:09</Meta>
        </Bubble>
        <Bubble $w={779} $gap={6} $pad="23px 32px 15px 31px" $radius="17px 48px 48px 0">
          <Body>
            <Line>{"Transmision disponible "}<Projector /></Line>
            <Line>{"- Abrir: "}<Link>http://espcam-bot.local</Link></Line>
          </Body>
          <Meta $drop={-6}>11:09</Meta>
          <InTail />
        </Bubble>
      </Chat>

      <Composer>
        <MenuButton>
          <svg width="46" height="36" viewBox="0 0 46 36" stroke="#fff" strokeWidth="6" strokeLinecap="round">
            <path d="M3 4h40M3 18h40M3 32h40" />
          </svg>
          Menú
        </MenuButton>
        <Glyph $before={35} width="66" height="66" viewBox="0 0 66 66">
          <circle cx="33" cy="33" r="29.800" />
          <Eye cx="22.500" cy="27" rx="3.800" ry="4.500" />
          <Eye cx="43.500" cy="27" rx="3.800" ry="4.500" />
          <path d="M20 41q13 14 26 0" />
        </Glyph>
        <MessageField><Caret /><Placeholder>Mensaje</Placeholder></MessageField>
        <Tools>
          <Glyph width="65" height="65" viewBox="0 0 65 65">
            <rect x="3" y="3" width="59" height="59" rx="15" />
            <rect x="16" y="16" width="12.500" height="13" rx="4" /><rect x="36.500" y="16" width="12.500" height="13" rx="4" />
            <rect x="16" y="37" width="12.500" height="13" rx="4" /><rect x="36.500" y="37" width="12.500" height="13" rx="4" />
          </Glyph>
          <Glyph $before={75} width="58" height="66" viewBox="0 0 58 66">
            <path d="M4 26L19 10C29-1 46 1 52 12c4 7 3 15-3 21L25 58C18 65 7 64 4 54c-1-5 0-9 4-13l23-24c4-3 9-3 11 1 3 4 1 8-2 11L22 48" />
          </Glyph>
          <Glyph $before={79} width="52" height="72" viewBox="0 0 52 72">
            <rect x="13.500" y="3.500" width="25" height="47" rx="12.500" />
            <path d="M3 37c0 30 46 30 46 0M26 60v9" />
          </Glyph>
        </Tools>
      </Composer>

      <Keyboard>
        <KeyRow>
          <Key>/VIGILAR<Siren /></Key>
          <Key><Camera /></Key>
          <Key>/APAGAR</Key>
        </KeyRow>
        <KeyRow>
          <Key>/comandos</Key>
          <Key>/estado</Key>
          <Key>/modDormido</Key>
        </KeyRow>
        <KeyRow>
          <Key>/iniciarVideo</Key>
          <Key>/pararVideo</Key>
        </KeyRow>
      </Keyboard>
    </Screen>
  );
}
